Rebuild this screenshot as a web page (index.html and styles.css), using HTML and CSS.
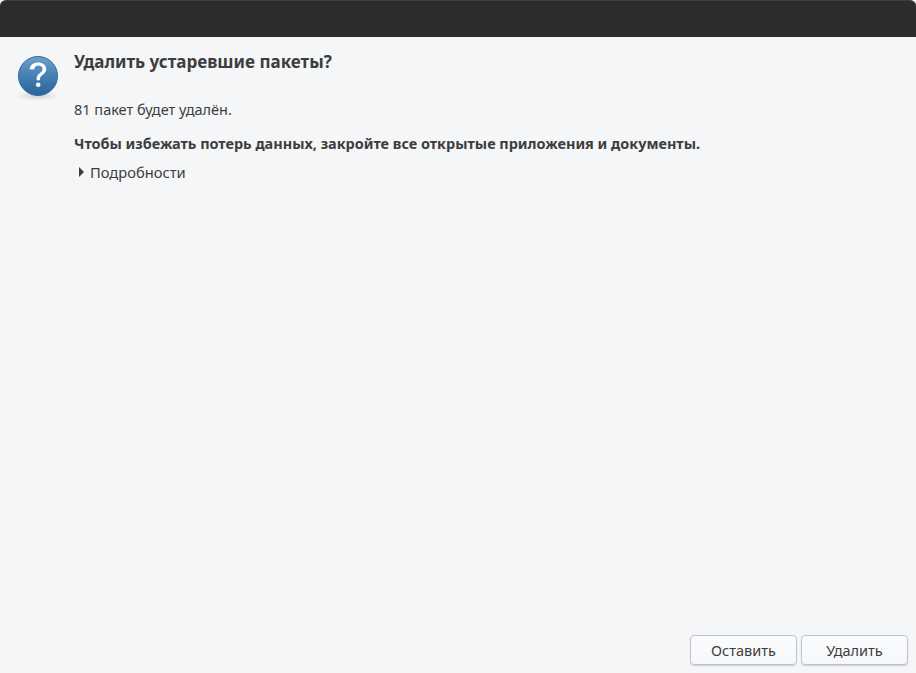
FILE: index.html
```html
<!DOCTYPE html>
<html lang="ru">
<head>
<meta charset="utf-8">
<title>Удалить устаревшие пакеты?</title>
<link rel="stylesheet" href="styles.css">
</head>
<body>
<div class="window">
  <header class="titlebar"></header>
  <main class="content">
    <div class="message">
      <svg class="icon" width="48" height="52" viewBox="0 0 48 52" aria-hidden="true">
        <defs>
          <linearGradient id="ball" x1="0" y1="0" x2="0" y2="1">
            <stop offset="0" stop-color="#6f9fcb"/>
            <stop offset="0.5" stop-color="#457fb5"/>
            <stop offset="1" stop-color="#2c6496"/>
          </linearGradient>
          <radialGradient id="shadow" cx="0.5" cy="0.5" r="0.5">
            <stop offset="0" stop-color="#000" stop-opacity="0.14"/>
            <stop offset="1" stop-color="#000" stop-opacity="0"/>
          </radialGradient>
        </defs>
        <ellipse cx="22" cy="41" rx="23" ry="5" fill="url(#shadow)"/>
        <circle cx="22" cy="21" r="19.5" fill="url(#ball)" stroke="#2f6a9f" stroke-width="1"/>
        <g transform="translate(-2 -2)">
          <path d="M15.600 16.200c.5-4.200 4-6.800 8.400-6.800 4.700 0 8.200 2.700 8.200 6.700 0 2.900-1.600 4.500-3.600 6-1.900 1.400-2.700 2.300-2.700 4.300v.9h-3.300v-1.300c0-3 1.300-4.400 3.100-5.800 1.700-1.300 2.900-2.300 2.900-4.100 0-2.100-1.700-3.500-4-3.500-2.500 0-4.200 1.500-4.600 3.900z" fill="#fff"/>
          <circle cx="24.200" cy="31.800" r="2.300" fill="#fff"/>
        </g>
      </svg>
      <div class="text">
        <h1 class="heading">Удалить устаревшие пакеты?</h1>
        <p class="count">81 пакет будет удалён.</p>
        <p class="warning">Чтобы избежать потерь данных, закройте все открытые приложения и документы.</p>
        <div class="expander"><span class="arrow"></span><span>Подробности</span></div>
      </div>
    </div>
    <div class="actions">
      <button class="button" type="button">Оставить</button>
      <button class="button" type="button">Удалить</button>
    </div>
  </main>
</div>
</body>
</html>
```
FILE: styles.css
```css
* { box-sizing: border-box; }
html, body { margin: 0; height: 100%; }
body {
  background: #f5f6f8;
  color: #3d3d3d;
  font-family: "Noto Sans", "Open Sans", sans-serif;
  font-size: 14.5px;
}
.window {
  height: 673px;
  display: flex;
  flex-direction: column;
  overflow: hidden;
}
.titlebar {
  height: 37px;
  flex: none;
  background: #2d2b2b;
  border-top: 1px solid #3f3d3d;
  border-radius: 6px 6px 0 0;
}
.content {
  flex: 1;
  display: flex;
  flex-direction: column;
  justify-content: space-between;
  padding: 0 8px 8px 16px;
}
.message { display: flex; padding-top: 13px; }
.icon { flex: none; margin: 5px 10px 0 0; }
.heading {
  margin: 0;
  font-size: 17.05px;
  line-height: 24px;
  font-weight: 700;
}
.count { margin: 25px 0 0; line-height: 20px; }
.warning { margin: 15px 0 0; line-height: 20px; font-size: 14.45px; font-weight: 700; }
.expander {
  display: flex;
  align-items: center;
  gap: 6px;
  margin: 8px 0 0 5px;
  line-height: 20px;
  font-size: 14.7px;
}
.arrow {
  width: 0;
  height: 0;
  border-left: 5px solid #3d3d3d;
  border-top: 5px solid transparent;
  border-bottom: 5px solid transparent;
}
.actions { display: flex; justify-content: flex-end; gap: 4px; }
.button {
  width: 107px;
  height: 30px;
  padding: 0;
  background: linear-gradient(#fbfcfd, #f6f7f9);
  border: 1px solid #c0c4c8;
  border-radius: 4px;
  box-shadow: 0 1px 1px rgba(0,0,0,0.16);
  color: #3d3d3d;
  font: inherit;
}
```
